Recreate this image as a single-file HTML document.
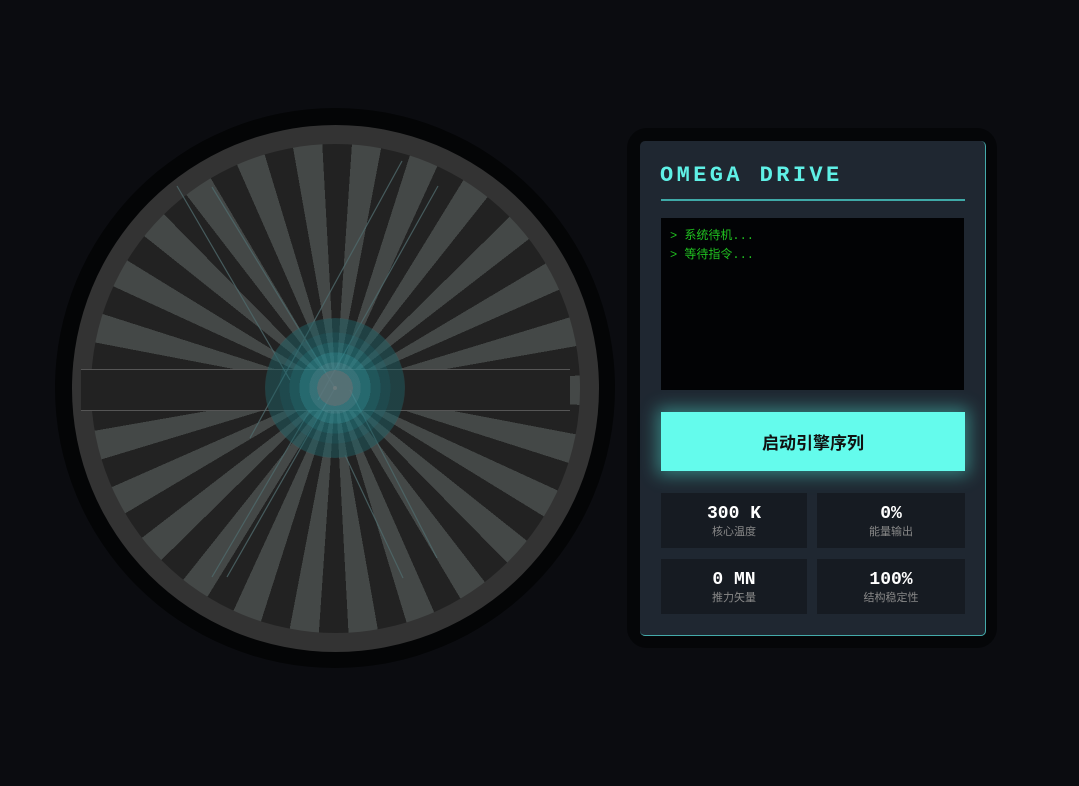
<!DOCTYPE html>
<html><head><meta charset="utf-8"><style>
*{margin:0;padding:0;box-sizing:border-box}
body{width:1079px;height:786px;background:#0b0c10;position:relative;overflow:hidden;font-family:"Liberation Sans","Noto Sans CJK SC",sans-serif}
.abs{position:absolute}
.outer{left:55px;top:108px;width:560px;height:560px;border-radius:50%;background:#040506}
.ring{left:72px;top:125px;width:527px;height:527px;border-radius:50%;background:#333}
.fan{left:91px;top:144px;width:489px;height:489px;border-radius:50%;background:repeating-conic-gradient(from -10deg,#444847 0 6.9deg,#222 6.9deg 13.85deg)}
.bar{left:81px;top:369px;width:489px;height:42px;background:#222;border-top:1px solid #555;border-bottom:1px solid #555}
.glow{left:265px;top:318px;width:140px;height:140px;border-radius:50%;background:radial-gradient(circle,rgba(90,120,125,.9) 0 18%,rgba(60,140,148,.75) 18% 26%,rgba(40,135,142,.7) 26% 36%,rgba(30,120,128,.6) 36% 46%,rgba(28,105,112,.55) 46% 56%,rgba(30,95,100,.5) 56% 70%,rgba(40,110,115,.35) 70% 100%)}
.dot{left:333px;top:386px;width:4px;height:4px;border-radius:50%;background:#6a7a7c}
.shell{left:627px;top:128px;width:370px;height:520px;border-radius:20px;background:#050608}
.panel{left:640px;top:141px;width:346px;height:495px;border-radius:5px;background:#1f2731;border-right:1px solid #4aa;border-bottom:1px solid #4aa}
.title{left:660px;top:163px;font-family:"Liberation Mono",monospace;font-weight:bold;font-size:22px;letter-spacing:3.4px;color:#5ff0e6}
.line{left:661px;top:199px;width:304px;height:2px;background:#3fa9a7}
.con{left:661px;top:218px;width:303px;height:172px;background:#020305;padding:9px 9px;font-family:"Liberation Mono","Noto Sans CJK SC",monospace;font-size:12px;line-height:19px;color:#20c020}
.btn{left:661px;top:412px;width:304px;height:59px;background:#64fbec;box-shadow:0 0 16px 4px rgba(80,230,215,.45);display:flex;align-items:center;justify-content:center;font-weight:bold;font-size:17px;color:#111}
.st{background:#161b22;text-align:center;color:#fff}
.st b{display:block;font-family:"Liberation Mono",monospace;font-size:18px;margin-top:10px;line-height:22px}
.st span{display:block;font-size:11px;color:#888;line-height:14px}
</style></head><body>
<div class="abs outer"></div>
<div class="abs ring"></div>
<div class="abs fan"></div>
<div class="abs bar"></div>
<svg class="abs" style="left:0;top:0" width="640" height="786"><g stroke="#4f6a6c" stroke-width="1.2" fill="none" opacity=".8"><line x1="212" y1="187" x2="335" y2="388"/><line x1="177" y1="186" x2="290" y2="380"/><line x1="402" y1="161" x2="250" y2="438"/><line x1="438" y1="186" x2="318" y2="400"/><line x1="227" y1="577" x2="335" y2="388"/><line x1="212" y1="577" x2="310" y2="410"/><line x1="403" y1="578" x2="345" y2="455"/><line x1="437" y1="558" x2="350" y2="390"/></g></svg>
<div class="abs glow"></div>
<div class="abs dot"></div>
<div class="abs shell"></div>
<div class="abs panel"></div>
<div class="abs title">OMEGA DRIVE</div>
<div class="abs line"></div>
<div class="abs con">&gt; 系统待机...<br>&gt; 等待指令...</div>
<div class="abs btn">启动引擎序列</div>
<div class="abs st" style="left:661px;top:493px;width:146px;height:55px"><b>300 K</b><span>核心温度</span></div>
<div class="abs st" style="left:817px;top:493px;width:148px;height:55px"><b>0%</b><span>能量输出</span></div>
<div class="abs st" style="left:661px;top:559px;width:146px;height:55px"><b>0 MN</b><span>推力矢量</span></div>
<div class="abs st" style="left:817px;top:559px;width:148px;height:55px"><b>100%</b><span>结构稳定性</span></div>
</body></html>
